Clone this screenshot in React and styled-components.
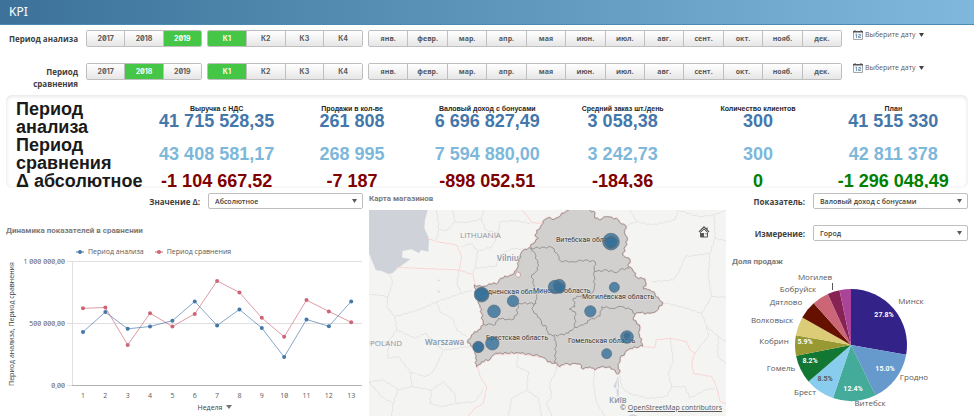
import React from 'react'
import styled, { createGlobalStyle } from 'styled-components'

const GlobalStyle = createGlobalStyle`
  * {
    box-sizing: border-box;
  }
  body {
    margin: 0;
    background: #fff;
    color: #595959;
    font-family: 'Open Sans', 'Noto Sans', sans-serif;
    font-size: 8px;
    font-variant-numeric: slashed-zero;
  }
`

const Header = styled.header`
  height: 25px;
  padding-left: 9px;
  border-bottom: 1px solid #4c8ab2;
  background: linear-gradient(90deg, #3c7299, #7fb8dc);
`

const PageTitle = styled.h1`
  margin: 0;
  color: #fff;
  font-family: 'Noto Sans', sans-serif;
  font-size: 12px;
  font-weight: normal;
  line-height: 23px;
`

const Filters = styled.section`
  padding: 5px 6px 0;
`

const FilterRow = styled.div`
  display: grid;
  grid-template-columns: 75px 116fr 156fr 474fr 121fr;
  column-gap: 5px;
  align-items: start;
  height: 33px;

  &:last-child {
    height: 32px;
  }
`

const FilterLabel = styled.div`
  padding: 3px 3px 0 0;
  color: #404040;
  font-weight: bold;
  line-height: 12px;
  text-align: right;
`

const ButtonGroup = styled.div`
  display: flex;
  height: 17px;
  border: 1px solid #bfbfbf;
  border-radius: 2px;
  overflow: hidden;
`

const FilterButton = styled.button`
  flex: 1 1 0;
  min-width: 0;
  padding: 0;
  border: 0;
  border-left: ${props => props.$first ? '0' : '1px solid #bfbfbf'};
  background: ${props => props.$active ? '#46c646' : 'linear-gradient(#fff, #e6e6e6)'};
  color: ${props => props.$active ? '#fff' : '#595959'};
  font-family: ${props => props.$digits ? "'Inter', sans-serif" : "'Open Sans', sans-serif"};
  font-size: 7px;
  font-variant-numeric: slashed-zero;
  font-weight: bold;
  line-height: 14px;
`

const DateButton = styled.button`
  display: flex;
  align-items: center;
  gap: 2px;
  height: 10px;
  margin-left: 6px;
  padding: 0;
  border: 0;
  background: none;
  color: #595959;
  font-family: 'Open Sans', sans-serif;
  font-size: 7px;
  line-height: 10px;
  white-space: nowrap;
`

const DateArrow = styled.svg`
  margin-left: 2px;
`

const KpiPanel = styled.section`
  margin: 0 6px;
  padding: 5px 7px 0;
  max-height: 93px;
  border-radius: 6px;
  box-shadow: inset 0 1px 4px #e0e0e0;
  overflow: hidden;
`

const KpiTable = styled.table`
  width: 100%;
  table-layout: fixed;
  border-collapse: collapse;
  font-family: 'Liberation Sans', Arial, sans-serif;
`

const RowTitle = styled.th`
  width: 136px;
  padding: 0 0 0 3px;
  color: #1a1a1a;
  font-size: 18px;
  line-height: 18px;
  text-align: left;
  vertical-align: top;
  white-space: nowrap;
`

const ColumnTitle = styled.th`
  height: 12px;
  padding: 5px 0 0;
  color: #262626;
  font-family: 'Liberation Sans', Arial, sans-serif;
  font-size: 7px;
  line-height: 7px;
  white-space: nowrap;
`

const Value = styled.td`
  padding: 0;
  color: ${props => props.$color};
  font-size: 18px;
  font-weight: bold;
  line-height: 18px;
  text-align: center;
  vertical-align: ${props => props.$top ? 'top' : 'middle'};
  white-space: nowrap;
`

const Columns = styled.main`
  display: grid;
  grid-template-columns: 357fr 357fr 236fr;
  gap: 6px;
  padding: 5px 6px 4px;
`

const Column = styled.section`
  min-width: 0;
`

const SelectRow = styled.div`
  display: flex;
  align-items: center;
  justify-content: flex-end;
  gap: 8px;
  margin-bottom: ${props => props.$space}px;
`

const SelectLabel = styled.label`
  color: #404040;
  font-weight: bold;
`

const SelectBox = styled.div`
  position: relative;
  width: 155px;
`

const Select = styled.select`
  display: block;
  width: 100%;
  height: 16px;
  padding: 0 16px 0 6px;
  border: 1px solid #bfbfbf;
  border-radius: 2px;
  background: #fff;
  color: #404040;
  appearance: none;
  font-family: 'Open Sans', sans-serif;
  font-size: 7px;
  font-weight: 600;
`

const SelectArrow = styled.svg`
  position: absolute;
  top: 6px;
  right: 6px;
  pointer-events: none;
`

const PanelTitle = styled.h2`
  margin: 0;
  color: #7b7b7b;
  font-family: 'Roboto', sans-serif;
  font-size: 8px;
  font-weight: bold;
  line-height: 12px;
`

const Legend = styled.div`
  display: flex;
  gap: 11px;
  margin: 10px 0 0 70px;
  line-height: 10px;
`

const LegendItem = styled.span`
  display: flex;
  align-items: center;
  gap: 4px;
  font-size: 7px;
`

const Drawing = styled.svg`
  display: block;
  width: 100%;
  height: auto;
  font-family: 'Open Sans', sans-serif;
  font-size: 8px;
`

const MapFrame = styled.div`
  position: relative;
  margin-top: 5px;
`

const HomeButton = styled.button`
  position: absolute;
  top: 16px;
  right: 16px;
  width: 12px;
  height: 12px;
  padding: 0;
  border: 0;
  background: none;
`

const Attribution = styled.div`
  position: absolute;
  right: 4px;
  bottom: 3px;
  color: #595959;
  font-size: 7px;
  line-height: 10px;
`

const AttributionLink = styled.a`
  color: #595959;
`

const YEARS = ['2017', '2018', '2019']
const QUARTERS = ['К1', 'К2', 'К3', 'К4']
const MONTHS = ['янв.', 'февр.', 'мар.', 'апр.', 'мая', 'июн.', 'июл.', 'авг.', 'сент.', 'окт.', 'нояб.', 'дек.']

const KPIS = [
  { title: 'Выручка с НДС', now: '41 715 528,35', before: '43 408 581,17', delta: '-1 104 667,52', color: '#800000' },
  { title: 'Продажи в кол-ве', now: '261 808', before: '268 995', delta: '-7 187', color: '#800000' },
  { title: 'Валовый доход с бонусами', now: '6 696 827,49', before: '7 594 880,00', delta: '-898 052,51', color: '#800000' },
  { title: 'Средний заказ шт./день', now: '3 058,38', before: '3 242,73', delta: '-184,36', color: '#800000' },
  { title: 'Количество клиентов', now: '300', before: '300', delta: '0', color: '#008000' },
  { title: 'План', now: '41 515 330', before: '42 811 378', delta: '-1 296 048,49', color: '#008000' },
]

// weekly values, thousands
const CURRENT = [431, 592, 456, 475, 522, 678, 483, 613, 463, 227, 532, 477, 678]
const PREVIOUS = [622, 629, 325, 583, 475, 577, 845, 751, 545, 391, 689, 597, 509]

const SHARES = [
  { city: 'Минск', value: 27.8, color: '#332288', x: 179, y: 34, px: 152, py: 47 },
  { city: 'Гродно', value: 15.0, color: '#6699cc', x: 182, y: 110, px: 153, py: 101 },
  { city: 'Витебск', value: 12.4, color: '#44aa99', x: 138, y: 136, px: 121, py: 121 },
  { city: 'Брест', value: 8.5, color: '#88ccee', x: 73, y: 125, px: 93, py: 111, dark: true },
  { city: 'Гомель', value: 8.2, color: '#117733', x: 49, y: 101, px: 78, py: 93 },
  { city: 'Кобрин', value: 5.9, color: '#999933', x: 42, y: 74, px: 73, py: 74 },
  { city: 'Волковыск', value: 5.4, color: '#ddcc77', x: 40, y: 53 },
  { city: 'Дятлово', value: 5.2, color: '#661100', x: 54, y: 35 },
  { city: 'Бобруйск', value: 4.8, color: '#cc6677', x: 66, y: 22 },
  { city: 'Могилев', value: 3.5, color: '#882255', x: 83, y: 10 },
  { city: '', value: 3.3, color: '#aa4499' },
]

// map geometry, three units to a pixel
const COUNTRY = [[530, 105], [534, 94], [548, 84], [568, 88], [580, 82], [590, 70], [612, 60], [612, 50], [675, 50], [675, 60], [690, 70], [690, 85], [710, 88], [725, 80], [740, 82], [760, 90], [770, 102], [782, 107], [778, 128], [787, 150], [773, 195], [795, 210], [790, 230], [803, 240], [815, 262], [840, 268], [843, 280], [835, 297], [855, 300], [870, 312], [883, 330], [893, 338], [875, 362], [855, 370], [825, 368], [810, 372], [805, 390], [823, 405], [823, 435], [833, 468], [795, 475], [780, 488], [765, 505], [760, 530], [763, 548], [757, 552], [745, 538], [735, 530], [705, 532], [690, 540], [675, 530], [655, 537], [645, 522], [630, 520], [615, 525], [600, 520], [585, 530], [575, 518], [560, 520], [545, 510], [530, 500], [510, 495], [460, 488], [400, 490], [385, 495], [375, 508], [350, 515], [335, 530], [332, 505], [330, 490], [325, 470], [308, 458], [320, 435], [340, 420], [355, 405], [350, 370], [345, 345], [335, 320], [328, 285], [350, 290], [380, 283], [400, 278], [408, 265], [440, 255], [455, 240], [462, 215], [468, 190], [480, 178], [498, 175], [497, 165], [510, 158], [520, 145], [510, 135], [530, 105]]

const REGIONS = [
  [[498, 175], [530, 172], [560, 172], [575, 190], [587, 213], [625, 215], [660, 210], [690, 215], [688, 245], [725, 240], [755, 248], [765, 238], [793, 235]],
  [[498, 175], [510, 190], [518, 220], [518, 240], [500, 255], [508, 290], [515, 320], [513, 340], [460, 340], [455, 375], [440, 390], [400, 385], [392, 403], [355, 403]],
  [[513, 340], [500, 355], [508, 370], [525, 385], [530, 402], [545, 412], [550, 432], [565, 438], [573, 455], [570, 520]],
  [[688, 245], [688, 290], [685, 305], [655, 315], [625, 325], [630, 350], [613, 357], [630, 365], [630, 410], [610, 430], [565, 438]],
  [[630, 412], [655, 405], [675, 390], [705, 378], [710, 350], [740, 355], [770, 350], [795, 358], [810, 372]],
]

const RED_BORDERS = [
  [[188, 145], [215, 155], [275, 165], [290, 200], [283, 240], [325, 255], [330, 285]],
  [[95, 232], [283, 240]],
  [[470, 60], [485, 75], [500, 98], [530, 100]],
  [[338, 530], [345, 560], [365, 590], [355, 640], [330, 655], [310, 678]],
  [[375, 495], [460, 490], [545, 504]],
  [[833, 470], [870, 472], [873, 450], [915, 445], [965, 455], [975, 480], [990, 490], [980, 515], [985, 550], [1040, 560], [1055, 590], [1065, 635], [1083, 640]],
]

const GREY_BORDERS = [
  [[215, 60], [222, 118], [245, 122], [270, 95], [263, 60]],
  [[222, 118], [215, 150]],
  [[270, 95], [300, 98], [350, 88], [355, 60]],
  [[350, 88], [362, 120], [400, 130], [405, 95], [450, 92], [495, 100]],
  [[290, 170], [320, 160], [338, 185], [380, 170], [400, 135]],
  [[338, 185], [330, 235], [395, 228], [398, 200], [440, 175], [480, 178]],
  [[330, 235], [322, 255]],
  [[75, 250], [82, 280], [70, 320], [12, 312]],
  [[70, 320], [65, 350], [90, 380], [160, 360], [215, 335], [320, 300]],
  [[283, 240], [275, 280], [290, 310]],
  [[90, 380], [95, 420], [70, 455], [12, 460]],
  [[95, 420], [150, 445], [180, 430], [235, 482], [300, 470], [325, 472]],
  [[215, 335], [225, 365], [262, 385], [275, 420], [305, 440]],
  [[70, 455], [68, 505], [100, 500], [135, 545], [142, 590], [100, 598], [85, 640], [50, 620], [12, 575]],
  [[135, 545], [180, 560], [205, 545], [235, 482]],
  [[142, 590], [200, 600], [235, 575], [268, 610], [275, 640], [330, 635], [355, 600]],
  [[12, 575], [55, 570], [100, 598]],
  [[85, 640], [80, 678]],
  [[200, 600], [195, 640], [230, 650], [275, 640]],
  [[460, 490], [455, 530], [490, 545], [485, 600], [440, 625], [430, 678]],
  [[485, 600], [520, 625], [530, 678]],
  [[577, 520], [570, 555], [553, 580], [560, 620], [545, 640], [560, 678]],
  [[690, 540], [685, 580], [695, 640], [720, 678]],
  [[763, 548], [770, 590], [790, 610], [850, 625], [905, 620], [920, 590], [910, 550], [925, 510], [915, 445]],
  [[920, 590], [960, 590], [975, 625], [1020, 600], [1050, 595]],
  [[782, 107], [815, 95], [860, 105], [930, 90], [940, 60]],
  [[795, 60], [815, 95]],
  [[940, 60], [1000, 80], [1048, 75], [1083, 60]],
  [[1048, 75], [1050, 145], [1083, 152]],
  [[1050, 145], [1035, 190], [960, 200], [945, 240], [925, 270], [860, 275]],
  [[893, 338], [950, 350], [1010, 370], [1040, 320], [1083, 322]],
  [[1040, 320], [1030, 260], [1035, 190]],
  [[1010, 370], [1025, 410], [1060, 440], [1083, 455]],
  [[1025, 410], [1030, 440], [1005, 470], [990, 490]],
  [[1060, 440], [1058, 500], [1083, 520]],
]

const SHOPS = [
  [350, 314, 22], [350, 313, 19], [387, 364, 19], [444, 333, 17], [340, 471, 17], [340, 471, 15], [382, 460, 20],
  [738, 155, 25], [738, 157, 18], [738, 157, 15], [748, 292, 15], [676, 364, 17], [786, 441, 19], [786, 437, 9], [725, 491, 15],
  [570, 291, 20], [583, 286, 18], [584, 294, 16], [584, 294, 13],
]

const REGION_LABELS = [
  { text: 'Витебская область', x: 187, y: 32 },
  { text: 'Гродненская область', x: 108, y: 84 },
  { text: 'Минская область', x: 164, y: 83 },
  { text: 'Могилёвская область', x: 213, y: 89 },
  { text: 'Брестская область', x: 117, y: 130 },
  { text: 'Гомельская область', x: 199, y: 133 },
]

// turns a coarse outline into an uneven border line
const borderPath = (points, amount) => {
  const out = [`M${points[0][0]} ${points[0][1]}`]
  for (let i = 1; i < points.length; i++) {
    const [x1, y1] = points[i - 1]
    const [x2, y2] = points[i]
    const length = Math.hypot(x2 - x1, y2 - y1)
    const steps = Math.max(1, Math.round(length / 7))
    for (let s = 1; s <= steps; s++) {
      const t = s / steps
      const shift = s === steps ? 0 : Math.sin(s * 2.3 + i * 5) * amount
      const x = x1 + (x2 - x1) * t - (y2 - y1) / length * shift
      const y = y1 + (y2 - y1) * t + (x2 - x1) / length * shift
      out.push(`L${x.toFixed(1)} ${y.toFixed(1)}`)
    }
  }
  return out.join('')
}

const CalendarIcon = () => (
  <svg width="10" height="10" viewBox="0 0 10 10" aria-hidden="true">
    <path d="M.5 1.500h9v8h-9z" fill="#f4f8fa" stroke="#a6a6a6" />
    <path d="M0 1h10v1.500H0z" fill="#555" />
    <path d="M2 0v2M8 0v2" stroke="#555" />
    <path d="M2.500 4.500l1-.5v4M5.500 4.500h2v1.500h-2v1.500h2.500" fill="none" stroke="#5d87a1" strokeWidth=".8" />
  </svg>
)

const Filter = ({ label, year }) => (
  <FilterRow>
    <FilterLabel>{label}</FilterLabel>
    <ButtonGroup role="group" aria-label={label}>
      {YEARS.map((item, index) => (
        <FilterButton key={item} $digits $first={index === 0} $active={item === year}>{item}</FilterButton>
      ))}
    </ButtonGroup>
    <ButtonGroup role="group" aria-label={label}>
      {QUARTERS.map((item, index) => (
        <FilterButton key={item} $digits $first={index === 0} $active={index === 0}>{item}</FilterButton>
      ))}
    </ButtonGroup>
    <ButtonGroup role="group" aria-label={label}>
      {MONTHS.map((item, index) => (
        <FilterButton key={item} $first={index === 0}>{item}</FilterButton>
      ))}
    </ButtonGroup>
    <DateButton>
      <CalendarIcon />
      Выберите дату
      <DateArrow width="5" height="4" viewBox="0 0 5 4"><path d="M0 0h5L2.500 4z" fill="#404040" /></DateArrow>
    </DateButton>
  </FilterRow>
)

const Dropdown = ({ id, label, value, space }) => (
  <SelectRow $space={space}>
    <SelectLabel htmlFor={id}>{label}</SelectLabel>
    <SelectBox>
      <Select id={id} defaultValue={value}>
        <option>{value}</option>
      </Select>
      <SelectArrow width="5" height="4" viewBox="0 0 5 4"><path d="M0 0h5L2.500 4z" fill="#595959" /></SelectArrow>
    </SelectBox>
  </SelectRow>
)

const Kpi = () => (
  <KpiPanel>
    <KpiTable>
      <tbody>
        <tr>
          <RowTitle scope="row" rowSpan={2}>Период<br />анализа</RowTitle>
          {KPIS.map(item => <ColumnTitle key={item.title} scope="col">{item.title}</ColumnTitle>)}
        </tr>
        <tr>
          {KPIS.map(item => <Value key={item.title} $top $color="#4477aa">{item.now}</Value>)}
        </tr>
        <tr>
          <RowTitle scope="row">Период<br />сравнения</RowTitle>
          {KPIS.map(item => <Value key={item.title} $color="#7db8da">{item.before}</Value>)}
        </tr>
        <tr>
          <RowTitle scope="row">Δ абсолютное</RowTitle>
          {KPIS.map(item => <Value key={item.title} $color={item.color}>{item.delta}</Value>)}
        </tr>
      </tbody>
    </KpiTable>
  </KpiPanel>
)

const Marker = ({ color }) => (
  <svg width="8" height="6" viewBox="0 0 8 6"><path d="M0 3h8" stroke={color} /><circle cx="4" cy="3" r="2" fill={color} /></svg>
)

const weekX = index => 77 + index * 22.35
const valueY = value => 128 - value * 0.1232

const Series = ({ values, color }) => (
  <g>
    <polyline points={values.map((v, i) => `${weekX(i)},${valueY(v)}`).join(' ')} fill="none" stroke={color} strokeOpacity=".65" />
    {values.map((v, i) => <circle key={i} cx={weekX(i)} cy={valueY(v)} r="2" fill={color} />)}
  </g>
)

const LineChart = () => (
  <Drawing viewBox="0 0 357 157" fill="#595959">
    <path d="M61 4.500h295M61 66.500h295M61 128.500h5M66.500 4v124" stroke="#e0e0e0" />
    <path d="M66 128.500h290" stroke="#b3b3b3" />
    <g textAnchor="end" fontSize="7">
      <text x="59" y="7">1 000 000,00</text>
      <text x="59" y="69">500 000,00</text>
      <text x="59" y="131">0,00</text>
    </g>
    <text transform="translate(8 67) rotate(-90)" textAnchor="middle" fontSize="7" fill="#404040">Период анализа, Период сравнения</text>
    <Series values={PREVIOUS} color="#cc6677" />
    <Series values={CURRENT} color="#4477aa" />
    <g textAnchor="middle" fontSize="7">
      {CURRENT.map((v, i) => <text key={i} x={weekX(i)} y="141">{i + 1}</text>)}
      <text x="204" y="153" fill="#404040">Неделя</text>
    </g>
    <path d="M220 148h6l-3 4z" fill="#737373" />
  </Drawing>
)

const ShopMap = () => (
  <Drawing viewBox="0 0 357 206">
    <rect width="357" height="206" fill="#f4f4f3" />
    <g transform="translate(-4 -20) scale(.33333)" fill="none" strokeWidth="3">
      <path d="M12 60H188L180 90L178 115L192 145L190 185L168 180L162 190L140 178L112 183L112 203L137 207L98 235L82 250L70 252L50 243L32 240L22 215L12 190Z" fill="#cfd3d9" />
      {GREY_BORDERS.map((points, i) => <path key={i} d={borderPath(points, 2)} stroke="#e3e3e3" />)}
      {RED_BORDERS.map((points, i) => <path key={i} d={borderPath(points, 1)} stroke="#fbd3d3" />)}
      <path d="M757 560l-3 30 2 30 4 0 2-30-2-30zM745 590l12-25 3 35-12-8z" fill="#cfd3d9" />
      <path d="M790 678q15-10 28 0z" fill="#cfd3d9" />
      <path d="M218 270l6 2M218 302l7 5" stroke="#cfcfcf" />
    </g>
    <g fill="#8f969d">
      <text x="91" y="28">LITHUANIA</text>
      <text x="1" y="136">POLAND</text>
    </g>
    <g fill="#8295ab" fontWeight="600">
      <text x="128" y="51">Vilnius</text>
      <text x="56" y="135">Warszawa</text>
      <text x="240" y="193">Київ</text>
    </g>
    <g transform="translate(-4 -20) scale(.33333)" fill="none" strokeWidth="3" strokeLinejoin="round">
      <path d={borderPath(COUNTRY, 3)} stroke="#f3cccc" strokeWidth="6" />
      <path d={borderPath(COUNTRY, 3)} fill="#d1d0cf" stroke="#999492" />
      {REGIONS.map((points, i) => <path key={i} d={borderPath(points, 3)} stroke="#999492" />)}
      <path d="M455 245l10 3 2 10-8 5-8-7z" fill="#f6f0ef" stroke="#c9a5a5" />
    </g>
    <g fontSize="7" fontFamily="Roboto, sans-serif" fill="#333" stroke="#e6e6e6" strokeWidth="1" paintOrder="stroke">
      {REGION_LABELS.map(item => <text key={item.text} x={item.x} y={item.y}>{item.text}</text>)}
    </g>
    <g transform="translate(-4 -20) scale(.33333)" fill="#33709b" fillOpacity=".8" stroke="#5b6a75" strokeWidth="2">
      {SHOPS.map(([x, y, r], i) => <circle key={i} cx={x} cy={y} r={r} />)}
    </g>
  </Drawing>
)

const pointAt = share => {
  const angle = share / 100 * Math.PI * 2
  return `${(119 + 56 * Math.sin(angle)).toFixed(2)} ${(75 - 56 * Math.cos(angle)).toFixed(2)}`
}

const PieChart = () => {
  let start = 0
  const slices = SHARES.map(item => {
    const from = start
    start += item.value
    return <path key={item.color} d={`M119 75L${pointAt(from)}A56 56 0 0 1 ${pointAt(start)}Z`} fill={item.color} />
  })

  return (
    <Drawing viewBox="0 -2 236 144" fill="#595959" textAnchor="middle">
      {slices}
      <path d="M100.500 13v7" stroke="#595959" />
      {SHARES.filter(item => item.city).map(item => <text key={item.city} x={item.x} y={item.y}>{item.city}</text>)}
      <g fontSize="7" fontWeight="bold" fontFamily="Roboto, sans-serif">
        {SHARES.filter(item => item.px).map(item => (
          <text key={item.city} x={item.px} y={item.py} fill={item.dark ? '#595959' : '#fff'}>{item.value.toFixed(1)}%</text>
        ))}
      </g>
    </Drawing>
  )
}

const App = () => (
  <>
    <GlobalStyle />
    <Header>
      <PageTitle>KPI</PageTitle>
    </Header>
    <Filters>
      <Filter label="Период анализа" year="2019" />
      <Filter label="Период сравнения" year="2018" />
    </Filters>
    <Kpi />
    <Columns>
      <Column>
        <Dropdown id="delta" label="Значение Δ:" value="Абсолютное" space={16} />
        <PanelTitle>Динамика показателей в сравнении</PanelTitle>
        <Legend>
          <LegendItem><Marker color="#4477aa" />Период анализа</LegendItem>
          <LegendItem><Marker color="#cc6677" />Период сравнения</LegendItem>
        </Legend>
        <LineChart />
      </Column>
      <Column>
        <PanelTitle>Карта магазинов</PanelTitle>
        <MapFrame>
          <ShopMap />
          <HomeButton aria-label="home">
            <svg width="12" height="12" viewBox="0 0 12 12">
              <path d="M1 6l5-5 5 5M9 1.500v2" fill="none" stroke="#595959" strokeWidth="1.300" />
              <path d="M2.500 6.500L6 3l3.500 3.500V11h-7z" fill="none" stroke="#595959" />
              <path d="M3 7h3v4H3zM7.500 7h1v1.500h-1z" fill="#595959" />
            </svg>
          </HomeButton>
          <Attribution>© <AttributionLink href="#osm">OpenStreetMap contributors</AttributionLink></Attribution>
        </MapFrame>
      </Column>
      <Column>
        <Dropdown id="measure" label="Показатель:" value="Валовый доход с бонусами" space={16} />
        <Dropdown id="dimension" label="Измерение:" value="Город" space={15} />
        <PanelTitle>Доля продаж</PanelTitle>
        <PieChart />
      </Column>
    </Columns>
  </>
)

export default App
